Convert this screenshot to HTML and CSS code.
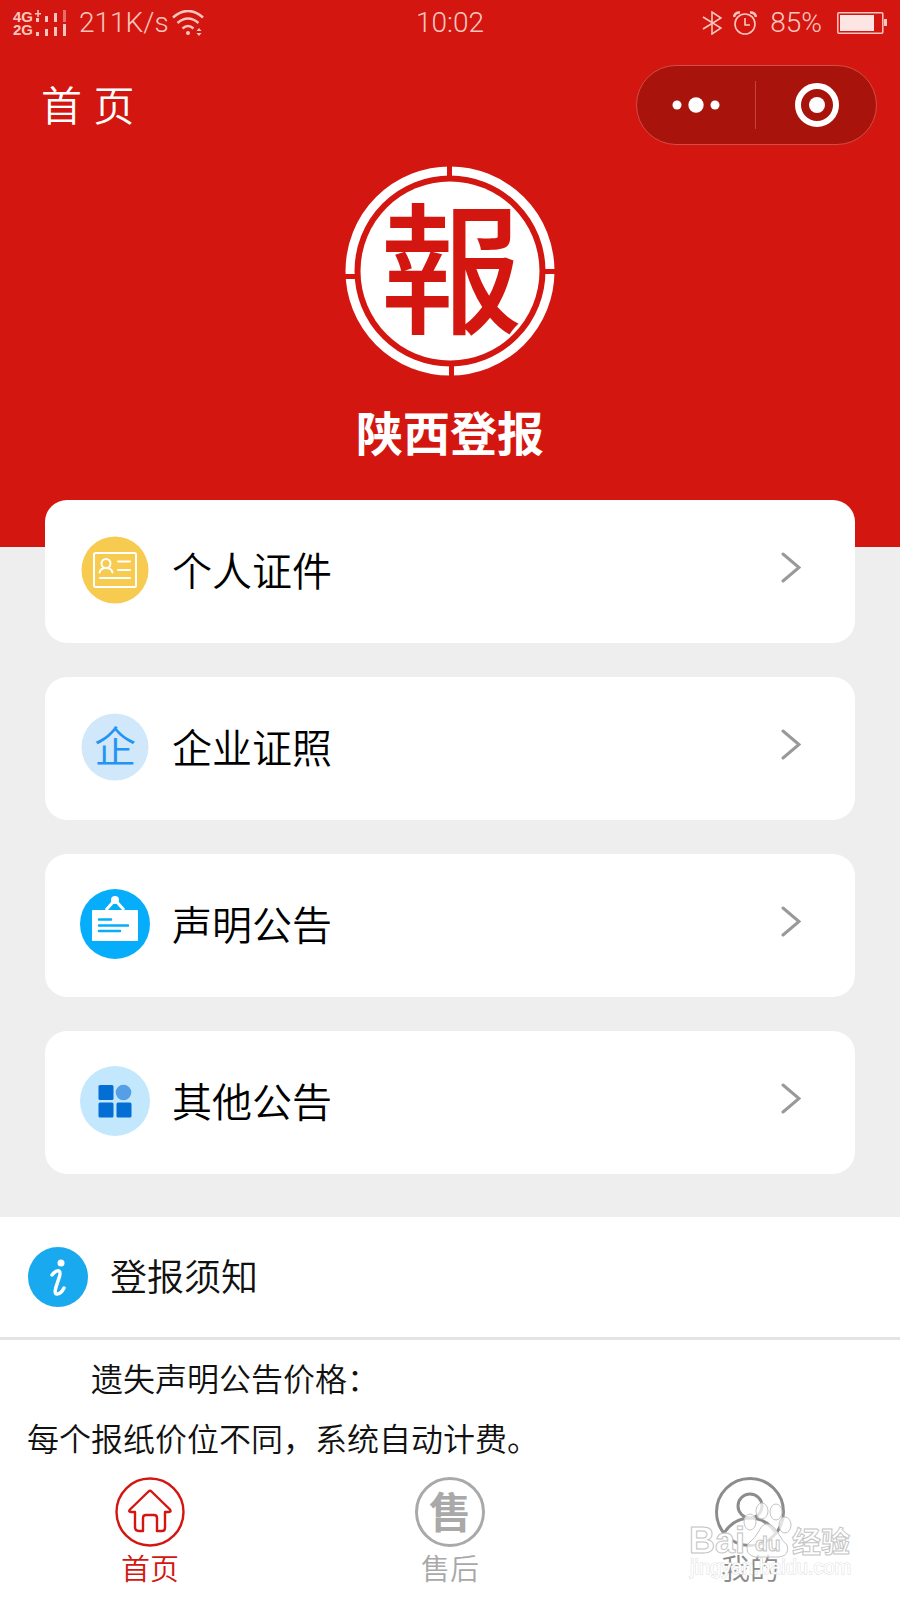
FILE: index.html
```html
<!DOCTYPE html>
<html lang="zh-CN">
<head>
<meta charset="utf-8">
<meta name="viewport" content="width=device-width, initial-scale=1">
<title>陕西登报</title>
<link rel="stylesheet" href="styles.css">
</head>
<body>
<header class="hero">
  <div class="status">
    <div class="status-side">
      <div class="network"><span>4G</span><span>2G</span></div>
      <svg class="signal" width="32" height="26" viewBox="0 0 32 26" fill="currentColor">
        <path d="M0 3h6v1.500H0zM2.300 0h1.500v7H2.300zM1 8h3v4H1zM10 6h3v6h-3zM19 3h3v9h-3zM1 22h3v4H1zM10 19h3v7h-3zM19 17h3v9h-3zM28 14h3v12h-3z"/>
        <path d="M28 0h3v12h-3z" opacity=".5"/>
      </svg>
      <span class="speed">211K/s</span>
      <svg width="32" height="26" viewBox="0 0 32 26" fill="none" stroke="currentColor" stroke-width="2.500">
        <path d="M1 7.500Q16-5.500 31 7.500M5.500 13Q16 4 26.500 13M10.500 18.500Q16 13.500 21.500 18.500"/>
        <circle cx="16" cy="23" r="2" fill="currentColor" stroke="none"/>
        <path d="M24.500 21h5L27 18zM24.500 23h5L27 26z" fill="currentColor" stroke="none"/>
      </svg>
    </div>
    <time class="clock">10:02</time>
    <div class="status-side status-right">
      <svg width="20" height="24" viewBox="0 0 20 24" fill="none" stroke="currentColor" stroke-width="1.600"><path d="M1 6l18 11-9 6V1l9 6L1 18"/></svg>
      <svg class="alarm" width="24" height="24" viewBox="0 0 24 24" fill="none" stroke="currentColor" stroke-width="1.600"><circle cx="12" cy="13" r="10"/><path d="M12 7v7h5"/><path d="M1 6Q2 1 7 1.500M23 6Q22 1 17 1.500" stroke-width="2.500"/></svg>
      <span class="battery-level">85%</span>
      <svg width="50" height="22" viewBox="0 0 50 22"><rect x=".8" y=".8" width="45" height="20.400" rx="1" fill="none" stroke="currentColor" stroke-width="1.500"/><path d="M3 3h34v16H3z" fill="#fde5e3"/><path d="M47 7h3v7h-3z" fill="currentColor"/></svg>
    </div>
  </div>
  <nav class="navbar">
    <h1 class="page-title">首 页</h1>
    <div class="capsule">
      <button type="button" class="capsule-btn" aria-label="更多">
        <svg width="48" height="44" viewBox="0 0 48 44" fill="#fff"><circle cx="5" cy="22" r="4.500"/><circle cx="24" cy="22" r="7.700"/><circle cx="43" cy="22" r="4.500"/></svg>
      </button>
      <button type="button" class="capsule-btn capsule-close" aria-label="关闭">
        <svg width="44" height="44" viewBox="0 0 44 44"><circle cx="22" cy="22" r="19" fill="none" stroke="#fff" stroke-width="6"/><circle cx="22" cy="22" r="8" fill="#fff"/></svg>
      </button>
    </div>
  </nav>
  <div class="brand">
    <svg class="logo" width="210" height="210" viewBox="0 0 210 210" role="img" aria-label="報">
      <circle cx="105" cy="105" r="100" fill="none" stroke="#fff" stroke-width="9"/>
      <path d="M102 0h5v12h-5zM104 198h5v12h-5zM0 108h12v5H0zM198 103h12v5h-12z" fill="#d31710"/>
      <circle cx="105" cy="105" r="89.500" fill="#fff"/>
      <text class="logo-char" x="106" y="157" text-anchor="middle">報</text>
    </svg>
    <h2 class="brand-name">陕西登报</h2>
  </div>
</header>

<main class="content">
  <section class="cards">
    <a class="card" href="#personal">
      <svg class="card-icon" viewBox="0 0 70 70" fill="none" stroke="#fff" stroke-width="2" stroke-linecap="round">
        <circle cx="35" cy="35" r="33.500" fill="#f6cb50" stroke="none"/>
        <rect x="14" y="18" width="42" height="34" rx="1.500"/>
        <circle cx="26" cy="28.500" r="4.500"/><path d="M19.500 37.500q1-4.500 6.500-4.500t6.500 4.500M38 26.500h12M38 35h12M20 43h30"/>
      </svg>
      <span class="card-label">个人证件</span>
      <svg class="chevron" viewBox="0 0 20 38"><path d="M2 3l16 13.500L2 30"/></svg>
    </a>
    <a class="card" href="#company">
      <svg class="card-icon" viewBox="0 0 70 70">
        <circle cx="35" cy="35" r="33.500" fill="#d0e8fa"/>
        <text class="icon-char" x="35" y="50" text-anchor="middle">企</text>
      </svg>
      <span class="card-label">企业证照</span>
      <svg class="chevron" viewBox="0 0 20 38"><path d="M2 3l16 13.500L2 30"/></svg>
    </a>
    <a class="card" href="#statement">
      <svg class="card-icon" viewBox="0 0 70 70">
        <circle cx="35" cy="35" r="35" fill="#06adfa"/>
        <rect x="12" y="21" width="46" height="31" rx="1" fill="#fff"/>
        <circle cx="35" cy="11" r="4" fill="#fff"/>
        <path d="M26 21l8-9h2l8 9" fill="none" stroke="#fff" stroke-width="3"/>
        <path d="M19 30.500h12M19 36.500h29M19 42h21" fill="none" stroke="#06adfa" stroke-width="2.500" stroke-linecap="round"/>
      </svg>
      <span class="card-label">声明公告</span>
      <svg class="chevron" viewBox="0 0 20 38"><path d="M2 3l16 13.500L2 30"/></svg>
    </a>
    <a class="card" href="#other">
      <svg class="card-icon" viewBox="0 0 70 70" fill="#036fd5">
        <circle cx="35" cy="35" r="35" fill="#c3e7fd"/>
        <rect x="18.500" y="19" width="15" height="15" rx="1.500"/><circle cx="43.500" cy="26.500" r="7.800" fill="#559fe6"/>
        <rect x="18.500" y="36.500" width="15" height="15" rx="1.500"/><rect x="36.500" y="36.500" width="15" height="15" rx="1.500"/>
      </svg>
      <span class="card-label">其他公告</span>
      <svg class="chevron" viewBox="0 0 20 38"><path d="M2 3l16 13.500L2 30"/></svg>
    </a>
  </section>

  <section class="notice">
    <div class="notice-head">
      <svg width="60" height="60" viewBox="0 0 60 60"><circle cx="30" cy="30" r="30" fill="#18a9ee"/><circle cx="33" cy="16" r="3.500" fill="#fff"/><path d="M24 28q4-5 7-4 2 1 0 7l-3 9q-2 7 1 7 4 0 7-6" fill="none" stroke="#fff" stroke-width="3.500" stroke-linecap="round"/></svg>
      <h3 class="notice-title">登报须知</h3>
    </div>
    <div class="notice-body">
      <p class="indent">遗失声明公告价格：</p>
      <p>每个报纸价位不同，系统自动计费。</p>
    </div>
  </section>
</main>

<nav class="tabbar">
  <a class="tab tab-active" href="#home">
    <svg class="tab-icon" viewBox="0 0 70 70" stroke-width="2.400" stroke-linejoin="round"><circle cx="35" cy="35" r="33.500"/><path d="M33.500 14.500q1.500-1.500 3 0L55 32.500q1.500 2.500-1 2.500h-4v16q0 3-3 3h-5V41q0-3-3-3h-8q-3 0-3 3v13h-4q-4 0-4-4V35h-4q-3 0-1-2.500z"/></svg>
    <span>首页</span>
  </a>
  <a class="tab" href="#service">
    <svg class="tab-icon" viewBox="0 0 70 70" stroke-width="3"><circle cx="35" cy="35" r="33.500"/><text class="tab-char" x="35" y="51" text-anchor="middle">售</text></svg>
    <span>售后</span>
  </a>
  <a class="tab tab-mine" href="#mine">
    <svg class="tab-icon" viewBox="0 0 70 70" stroke-width="3"><circle cx="35" cy="35" r="33.500"/><circle cx="35" cy="29" r="12"/><path d="M9 56q10-15 26-15t26 15"/></svg>
    <span>我的</span>
  </a>
  <svg class="watermark" width="168" height="84" viewBox="0 0 168 84" fill="#fff" stroke="#c4c4c4">
    <g fill-opacity=".75"><ellipse cx="62" cy="22" rx="6" ry="8"/><ellipse cx="74" cy="11" rx="6" ry="8"/><ellipse cx="88" cy="12" rx="6" ry="8"/><ellipse cx="97" cy="25" rx="6" ry="8"/><path d="M79 24q6 0 11 9t9 12q3 10-7 12H67q-11-3-7-13 8-7 11-13 3-7 8-7z"/></g>
    <text class="mark-name" x="1" y="53">Bai</text>
    <text class="mark-paw" x="67" y="51">du</text>
    <text class="mark-cn" x="104" y="53">经验</text>
    <text class="mark-url" x="2" y="74">jingyan.baidu.com</text>
  </svg>
</nav>
</body>
</html>
```
FILE: styles.css
```css
* { box-sizing: border-box; }
body {
  margin: 0;
  min-height: 100vh;
  display: flex;
  flex-direction: column;
  background: #fff;
  color: #111;
  font-family: "Liberation Sans", "Noto Sans CJK SC", sans-serif;
  font-weight: 350;
}
h1, h2, h3, p { margin: 0; font-weight: inherit; }
svg { display: block; flex-shrink: 0; }
a { color: inherit; text-decoration: none; }

.hero { background: #d31710; color: #fff; padding-bottom: 84px; }
.status {
  display: grid;
  grid-template-columns: 1fr auto 1fr;
  align-items: center;
  height: 46px;
  padding: 0 13px;
  color: #f9c6bf;
  font: 300 28px/46px Roboto, sans-serif;
}
.status-side { display: flex; align-items: center; }
.status-right { justify-content: flex-end; }
.network {
  display: flex;
  flex-direction: column;
  font: 700 15px/13px "Liberation Sans", sans-serif;
}
.signal { margin-left: 2px; }
.speed { margin: 0 3px 0 12px; }
.alarm { margin: 0 13px 0 11px; }
.battery-level { margin-right: 15px; }

.navbar {
  display: flex;
  justify-content: space-between;
  align-items: center;
  padding: 19px 23px 0 41px;
}
.page-title { padding-top: 4px; font-size: 41px; line-height: 76px; }
.capsule {
  display: flex;
  width: 241px;
  height: 80px;
  padding: 15px 0;
  border: 1px solid #d34c46;
  border-radius: 40px;
  background: #a8130c;
}
.capsule-btn {
  flex: 1;
  display: flex;
  align-items: center;
  justify-content: center;
  padding: 0;
  border: 0;
  background: none;
}
.capsule-close { padding-left: 3px; border-left: 1px solid #c8413b; }

.brand {
  display: flex;
  flex-direction: column;
  align-items: center;
  gap: 30px;
  padding-top: 21px;
}
.logo-char { font: 500 142px "Noto Sans CJK TC", sans-serif; fill: #d31710; }
.brand-name { font-size: 47px; font-weight: 700; line-height: 57px; }

.content { background: #eee; }
.cards {
  position: relative;
  display: flex;
  flex-direction: column;
  gap: 34px;
  margin-top: -47px;
  padding: 0 45px 43px;
}
.card {
  display: flex;
  align-items: center;
  height: 143px;
  padding: 0 54px 3px 35px;
  border-radius: 22px;
  background: #fff;
  color: #000;
}
.card-icon { width: 70px; height: 70px; }
.card-label { flex: 1; margin-left: 22px; padding-top: 4px; font-size: 40px; line-height: 60px; }
.chevron {
  width: 20px;
  height: 38px;
  fill: none;
  stroke: #999;
  stroke-width: 3px;
  stroke-linecap: round;
}
.icon-char { font-size: 42px; fill: #2494f4; }

.notice { background: #fff; }
.notice-head {
  display: flex;
  align-items: center;
  gap: 22px;
  padding: 30px 28px;
  border-bottom: 3px solid #e4e4e4;
}
.notice-title { padding-top: 4px; font-size: 37px; line-height: 56px; }
.notice-body { padding: 10px 27px 0; font-size: 32px; line-height: 60px; }
.indent { text-indent: 2em; }

.tabbar {
  position: relative;
  display: flex;
  margin-top: auto;
  background: #fff;
}
.tab {
  flex: 1;
  display: flex;
  flex-direction: column;
  align-items: center;
  gap: 2px;
  padding: 7px 0 9px;
  color: #a9a9a9;
  font-size: 29px;
  line-height: 42px;
}
.tab-active { color: #d31710; }
.tab-mine { color: #8c8c8c; }
.tab-icon { width: 70px; height: 70px; fill: none; stroke: currentColor; }
.tab-char { font-size: 42px; font-weight: 700; fill: currentColor; stroke: none; }
.watermark { position: absolute; right: 44px; bottom: 16px; }
.mark-name { font: 700 36px "Liberation Sans", sans-serif; }
.mark-paw { font: 700 21px "Liberation Sans", sans-serif; }
.mark-cn { font: 700 29px "Noto Sans CJK SC", sans-serif; }
.mark-url { font: 400 20px "Liberation Sans", sans-serif; stroke: #ddd; paint-order: stroke; }
```
